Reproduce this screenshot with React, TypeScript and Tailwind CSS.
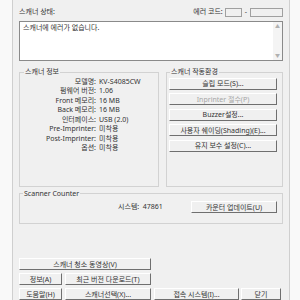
import { ReactNode } from 'react';

const font = { fontFamily: '"Noto Sans", "Noto Sans CJK KR", sans-serif' };

function Btn({
  children,
  className = '',
  disabled = false,
}: {
  children: ReactNode;
  className?: string;
  disabled?: boolean;
}) {
  return (
    <button
      type="button"
      className={`flex h-[12px] items-center justify-center border border-t-white border-l-white border-r-[#6f6f6f] border-b-[#6f6f6f] bg-[#f0f0f0] text-[7px] leading-none ${
        disabled ? 'text-[#a6a6a6]' : 'text-[#333]'
      } ${className}`}
    >
      {children}
    </button>
  );
}

const info: [string, string][] = [
  ['모델명:', 'KV-S4085CW'],
  ['펌웨어 버전:', '1.06'],
  ['Front 메모리:', '16 MB'],
  ['Back 메모리:', '16 MB'],
  ['인터페이스:', 'USB (2.0)'],
  ['Pre-Imprinter:', '미착용'],
  ['Post-Imprinter:', '미착용'],
  ['옵션:', '미착용'],
];

export default function App() {
  return (
    <div
      className="flex h-[300px] w-[300px] overflow-hidden bg-[#f9f9f9] text-[7px] text-[#333]"
      style={font}
    >
      <div className="ml-[12px] flex h-full w-[278px] flex-col border-x border-x-[#cfcfcf] bg-[#f0f0f0] pl-[6px] pr-[6px]">
        {/* status header */}
        <div className="mt-[7px] flex h-[11px] items-center justify-between">
          <span>스캐너 상태:</span>
          <div className="flex items-center">
            <span className="mr-[2px]">에러 코드:</span>
            <span className="h-[9px] w-[17px] border border-[#a0a0a0] bg-[#f0f0f0]" />
            <span className="mx-[3px]">-</span>
            <span className="h-[9px] w-[33px] border border-[#a0a0a0] bg-[#f0f0f0]" />
          </div>
        </div>

        {/* status text */}
        <div className="mt-[3px] flex h-[41px] border border-[#8a8a8a] bg-white">
          <div className="flex-1 px-[3px] pt-[1px]">스캐너에 에러가 없습니다.</div>
          <div className="flex w-[9px] flex-col items-center justify-between bg-[#f4f4f4] py-[1px] text-[5px] text-[#b0b0b0]">
            <span>▲</span>
            <span>▼</span>
          </div>
        </div>

        {/* info + settings */}
        <div className="mt-[6px] flex h-[121px] gap-[7px]">
          <fieldset className="w-[140px] border border-[#d2d2d2] pl-[1px]">
            <legend className="ml-[3px] px-[1px]">스캐너 정보</legend>
            <div className="-mt-[1px] grid grid-cols-[75px_1fr] gap-x-[3px]">
              {info.map(([k, v]) => (
                <div key={k} className="contents">
                  <span className="text-right leading-[9.5px]">{k}</span>
                  <span className="leading-[9.5px]">{v}</span>
                </div>
              ))}
            </div>
          </fieldset>
          <fieldset className="flex-1 border border-[#d2d2d2]">
            <legend className="ml-[3px] px-[1px]">스캐너 작동환경</legend>
            <div className="ml-[2px] mr-[5px] flex flex-col gap-[3.5px]">
              <Btn>슬립 모드(S)...</Btn>
              <Btn disabled>Inprinter 절수(P)</Btn>
              <Btn>Buzzer설정...</Btn>
              <Btn>사용자 쉐이딩(Shading)(E)...</Btn>
              <Btn>유지 보수 설정(C)...</Btn>
            </div>
          </fieldset>
        </div>

        {/* counter */}
        <fieldset className="mt-[2px] h-[36px] border border-[#d2d2d2]">
          <legend className="ml-[3px] px-[1px]">Scanner Counter</legend>
          <div className="mt-[2px] flex items-center">
            <span className="ml-[98px] w-[66px]">시스템:&nbsp; 47861</span>
            <Btn className="ml-[7px] w-[86px]">카운터 업데이트(U)</Btn>
          </div>
        </fieldset>

        {/* bottom buttons */}
        <div className="mt-[34px] flex flex-col gap-[3px]">
          <Btn className="w-[132px]">스캐너 청소 동영상(V)</Btn>
          <div className="flex gap-[3px]">
            <Btn className="w-[43px]">정보(A)</Btn>
            <Btn className="w-[86px]">최근 버전 다운로드(T)</Btn>
          </div>
          <div className="flex">
            <Btn className="w-[43px]">도움말(H)</Btn>
            <Btn className="ml-[3px] w-[86px]">스캐너선택(X)...</Btn>
            <Btn className="ml-[3px] w-[85px]">접속 시스템(I)...</Btn>
            <Btn className="ml-[2px] w-[40px]">닫기</Btn>
          </div>
        </div>
      </div>
    </div>
  );
}
